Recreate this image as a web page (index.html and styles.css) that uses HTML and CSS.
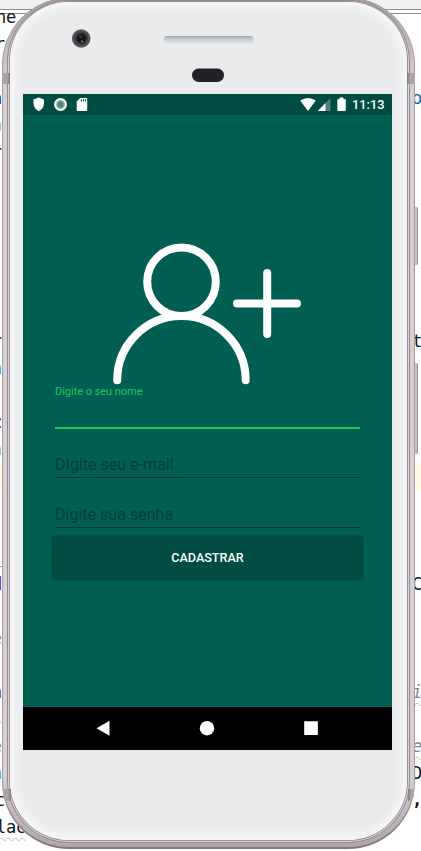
FILE: index.html
```html
<!DOCTYPE html>
<html lang="pt-BR">
<head>
<meta charset="utf-8">
<title>Cadastro</title>
<link rel="stylesheet" href="styles.css">
</head>
<body>
<main class="stage">
  <div class="editor" aria-hidden="true">
    <div class="toolbar"></div>
    <div class="code">
      <div class="line"><span class="wide">ne (</span></div>
      <div class="line"><span class="near">r</span></div>
      <div class="line"></div>
      <div class="line"><span class="edge navy">n</span><span class="blue">o</span></div>
      <div class="line"><span class="edge gray">n</span></div>
      <div class="line"><span class="edge">r</span></div>
      <div class="line"></div><div class="line"></div><div class="line"></div>
      <div class="line"></div><div class="line"></div><div class="line"></div>
      <div class="line"><span class="edge">r</span><span>t</span></div>
      <div class="line"><span class="edge blue">n</span></div>
      <div class="line"></div>
      <div class="line"><span class="edge purple">z</span></div>
      <div class="line"><span class="edge gray">n</span></div>
      <div class="line current"></div>
      <div class="line"></div><div class="line"></div>
      <div class="line"><span class="edge blue">_</span></div>
      <div class="line"><span class="edge purple">d</span><span>C</span></div>
      <div class="line"></div>
      <div class="line"><span class="edge gray">e</span></div>
      <div class="line"></div>
      <div class="line"><span class="edge purple">n</span><span class="gray typo">i</span></div>
      <div class="line"><span class="edge gray">s</span></div>
      <div class="line"><span class="edge gray">e</span><span class="gray typo">e</span></div>
      <div class="line"><span class="edge blue">n</span><span>D</span></div>
      <div class="line"><span class="near">c</span><span class="bold">,</span></div>
      <div class="line"><span class="wide wavy">lac</span></div>
    </div>
  </div>

  <div class="device">
    <div class="side-buttons"><i class="power"></i><i class="volume"></i></div>
    <div class="rim rim-a"><div class="rim rim-b"><div class="rim rim-c"><div class="rim rim-d"><div class="rim rim-e">
      <div class="face">
        <header class="sensors">
          <svg class="hardware" viewBox="0 0 395 91" width="395" height="91">
            <defs><linearGradient id="speaker" x1="0" y1="0" x2="0" y2="1"><stop offset="0" stop-color="#9ca2ac"/><stop offset=".4" stop-color="#c9ccd2"/><stop offset="1" stop-color="#e0e2e5"/></linearGradient></defs>
            <g transform="translate(1.700 1)">
              <circle cx="69.500" cy="35.500" r="9.300" fill="#55575b"/>
              <circle cx="69.500" cy="35.500" r="7" fill="#3b3d41"/>
              <circle cx="69.800" cy="35.500" r="4.700" fill="#131518"/>
              <circle cx="69" cy="33.500" r="1.600" fill="#303947"/>
              <circle cx="70.300" cy="38.500" r="1.200" fill="#79692e"/>
              <rect x="152" y="33" width="90" height="7.500" rx="3.700" fill="url(#speaker)"/>
              <rect x="180.300" y="65.500" width="32" height="13.500" rx="6.700" fill="#202225"/>
            </g>
          </svg>
        </header>
        <section class="screen">
          <div class="status">
            <svg class="status-left" viewBox="0 0 62 21" width="62" height="21">
              <path d="M5.800 3.600 11 5.400V9c0 3.800-2 6.800-5.200 8.200C2.500 15.800.5 12.800.5 9V5.400Z" fill="#fff"/>
              <circle cx="27.500" cy="10.500" r="6.500" fill="#fff"/><circle cx="27.500" cy="10.500" r="4.500" fill="#9dbdb8"/><circle cx="27.500" cy="10.500" r="3.200" fill="#4d877f"/>
              <path d="M47.200 4h6q1 0 1 1v11q0 1-1 1h-8.500q-1 0-1-1V7.500Z" fill="#fff"/>
              <path d="M48.400 5.200v2.300M50.600 5.200v2.300M52.600 5.200v2.300" stroke="#00483f" stroke-width="1.100"/>
            </svg>
            <div class="status-right">
              <svg viewBox="0 0 48 21" width="48" height="21">
                <path d="M.2 6.500Q8 1.300 15.800 6.500L8 17Z" fill="#fff"/>
                <path d="M17.800 17 30.500 4v13Z" fill="#4d7f78"/><path d="M17.800 17l7.700-8v8Z" fill="#fff"/>
                <path d="M39.500 3.500h4V5h1.300q1 0 1 1v10q0 1-1 1h-6.500q-1 0-1-1V6q0-1 1-1h1.200Z" fill="#fff"/>
              </svg>
              <span>11:13</span>
            </div>
          </div>
          <div class="content">
            <svg class="person" viewBox="0 0 190 143" width="190" height="143" fill="none" stroke="#fff" stroke-width="8" stroke-linecap="round">
              <circle cx="69.500" cy="39.800" r="34.300"/>
              <path d="M5.200 138.300A64.250 64.250 0 0 1 133.700 138.300"/>
              <path d="M155.200 31v61M125 61.500h60"/>
            </svg>
            <form class="form">
              <div class="field field-name"><label>Digite o seu nome</label></div>
              <div class="field"><label>DIgite seu e-mail</label></div>
              <div class="field"><label>Digite sua senha</label></div>
              <button class="submit" type="button">CADASTRAR</button>
            </form>
          </div>
          <nav class="navbar">
            <svg viewBox="0 0 369 43" width="369" height="43" fill="#fff">
              <path d="M73.500 21.200 86.500 13.800v14.900Z"/><circle cx="184" cy="21.200" r="7.200"/><rect x="281.200" y="14.200" width="13.700" height="13.700" rx=".6"/>
            </svg>
          </nav>
        </section>
      </div>
    </div></div></div></div></div>
  </div>
</main>
</body>
</html>
```
FILE: styles.css
```css
* { box-sizing: border-box; }
body { margin: 0; overflow: hidden; background: #fff; font-family: Roboto, sans-serif; }
.stage { display: grid; width: 421px; height: 851px; overflow: hidden; }
.editor, .device { grid-area: 1 / 1; min-width: 0; }

/* Code editor behind the device */
.editor { position: relative; overflow: hidden; }
.toolbar { height: 14px; background: #f0f0f0; border-bottom: 1px solid #8c8c8c; box-shadow: inset 0 -3px #fff, inset 0 -4px #8c8c8c; }
.code { margin-top: -10px; position: relative; font: 17px/27px "DejaVu Sans Mono", monospace; color: #111; }
.line { display: flex; justify-content: space-between; height: 27px; }
.line span { width: 9px; overflow: hidden; white-space: pre; }
.line span:last-child:not(.edge):not(.near):not(.wide) { margin-left: auto; }
.line .edge { width: 2px; direction: rtl; }
.line .near { width: 12px; text-indent: -5px; }
.line .wide { width: 60px; text-indent: -4px; letter-spacing: -.3px; }
.wavy, .typo { text-decoration: underline wavy #a8cfaa 1px; text-underline-offset: 4px; }
.navy { color: #000080; font-weight: bold; }
.blue { color: #1b5fa8; }
.purple { color: #660e7a; font-weight: bold; }
.gray { color: #858585; }
.typo { font-style: italic; }
.bold { font-weight: bold; }
.current { background: #fffae3; }

/* Device shell */
.device { position: relative; width: 413px; height: 851px; margin: -2px 0 0 2px; }
.side-buttons { position: absolute; left: 412px; top: 209px; display: flex; flex-direction: column; gap: 98px; }
.side-buttons i { width: 4px; border-radius: 0 2px 2px 0; background: #c5c4c2; border-right: 1px solid #918e8c; }
.power { height: 58px; }
.volume { height: 91px; }
.rim { height: 100%; }
.rim-a { position: relative; padding: 0 1px 2px; border-radius: 67px; background: linear-gradient(#8f8588, #a99fa2 80px, #a99fa2 790px, #81777a); }
.rim-b { padding: 2px 4px 4px; border-radius: 66px; background: linear-gradient(#a69c9f, #d8cfd2 85px, #d8cfd2 775px, #b0a6a9); }
.rim-c { padding: 1px; border-radius: 62px; background: #948b8e; }
.rim-d { padding: 0 1px 1px; border-radius: 61px; background: #dcd5d7; }
.rim-e { padding: 1px; border-radius: 60px; background: #989193; }
.rim-a::before, .rim-a::after {
  content: ""; position: absolute; left: 0; right: 0; height: 11px;
  background: linear-gradient(90deg, #aca5a7 5px, #817a7c 8px, transparent 8px, transparent 405px, #817a7c 405px, #aca5a7 408px);
}
.rim-a::before { top: 75px; }
.rim-a::after { bottom: 48px; height: 12px; left: 1px; right: 1px; border-radius: 0 0 6px 6px; }
.face { height: 100%; padding: 0 13px; border-radius: 59px; background: #eaebed; box-shadow: inset 0 0 9px 5px #f6f7f9; }
.sensors { height: 92px; margin: 0 -13px; }
.hardware { display: block; }

/* App screen */
.screen { display: flex; flex-direction: column; width: 369px; height: 656px; background: #005e53; }
.status { display: flex; justify-content: space-between; height: 21px; padding: 0 7.5px 0 10px; background: #004b42; color: #fff; }
.status svg { display: block; }
.status-right { display: flex; gap: 4.5px; font-size: 12.8px; font-weight: 500; line-height: 22px; }
.content { flex: 1; padding: 127px 28px 0; }
.person { display: block; margin-left: 61px; }
.form { display: flex; flex-direction: column; }
.field { display: flex; align-items: flex-end; height: 50px; margin: 0 4px; padding-bottom: 2px; border-bottom: 1px solid #003d36; color: #004039; font-size: 16px; line-height: 20px; letter-spacing: .02px; }
.field-name { align-items: flex-start; height: 44px; margin-bottom: -1px; padding: 0; border-bottom: 2px solid #28c862; color: #22c35e; font-size: 11px; line-height: 14px; letter-spacing: -.03px; }
.submit { height: 46px; margin-top: 7px; padding: 0; border: 1px solid #00544b; border-radius: 2px; background: #004b42; color: #fff; font: 500 12.6px/44px Roboto, sans-serif; }
.navbar { height: 43px; background: #000; }
.navbar svg { display: block; }
```
